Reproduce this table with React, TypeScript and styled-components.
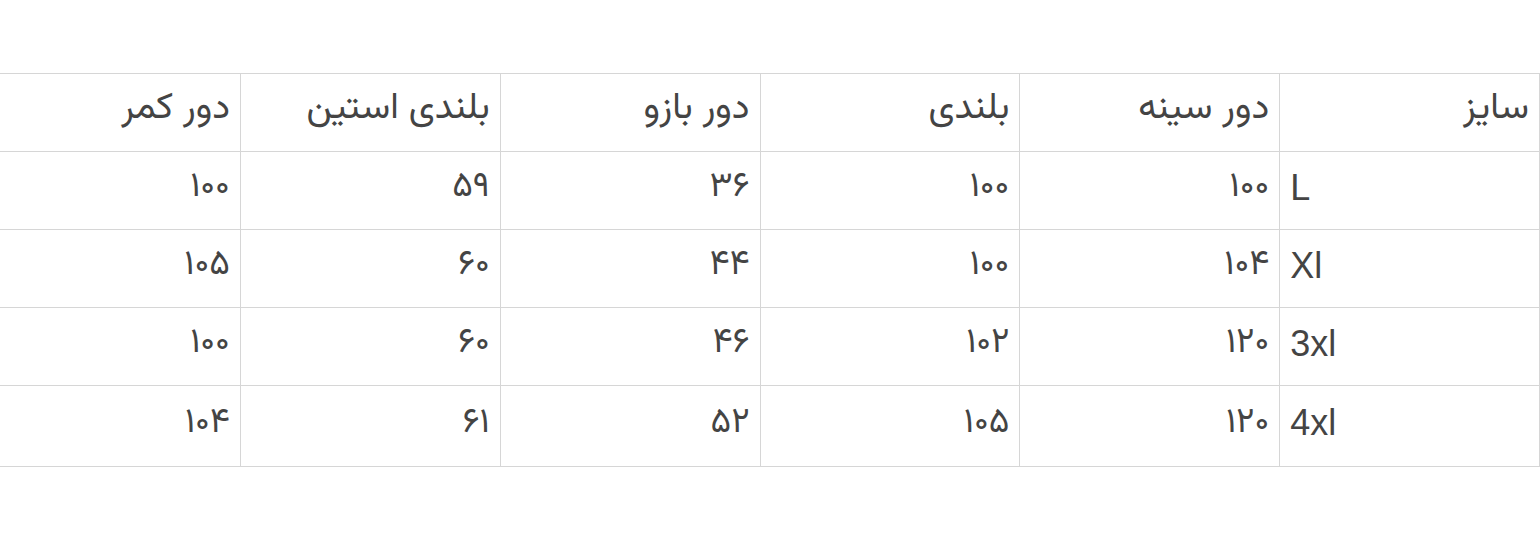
import styled, { createGlobalStyle } from 'styled-components'

const GlobalStyle = createGlobalStyle`
  html, body {
    margin: 0;
    padding: 0;
    background: #ffffff;
  }
  body {
    font-family: 'Liberation Sans', 'Vazirmatn', 'DejaVu Sans', sans-serif;
    color: #444444;
  }
`

type Row = {
  size: string
  values: string[]
}

const headers = ['سایز', 'دور سینه', 'بلندی', 'دور بازو', 'بلندی استین', 'دور کمر']

const rows: Row[] = [
  { size: 'L', values: ['۱۰۰', '۱۰۰', '۳۶', '۵۹', '۱۰۰'] },
  { size: 'Xl', values: ['۱۰۴', '۱۰۰', '۴۴', '۶۰', '۱۰۵'] },
  { size: '3xl', values: ['۱۲۰', '۱۰۲', '۴۶', '۶۰', '۱۰۰'] },
  { size: '4xl', values: ['۱۲۰', '۱۰۵', '۵۲', '۶۱', '۱۰۴'] },
]

export default function App() {
  return (
    <Page>
      <GlobalStyle />
      <TableWrap>
        <SizeTable>
          <thead>
            <tr>
              {headers.map((h) => (
                <HeadCell key={h}>{h}</HeadCell>
              ))}
            </tr>
          </thead>
          <tbody>
            {rows.map((row) => (
              <tr key={row.size}>
                <Cell $latin>{row.size}</Cell>
                {row.values.map((v, i) => (
                  <Cell key={i}>{v}</Cell>
                ))}
              </tr>
            ))}
          </tbody>
        </SizeTable>
      </TableWrap>
    </Page>
  )
}

const Page = styled.div`
  width: 1540px;
  height: 558px;
  padding-top: 73px;
  box-sizing: border-box;
  overflow: hidden;
`

const TableWrap = styled.div`
  direction: rtl;
  overflow: hidden;
`

const SizeTable = styled.table`
  width: 1560px;
  table-layout: fixed;
  border-collapse: collapse;
  direction: rtl;
`

const HeadCell = styled.th`
  height: 78px;
  padding: 0 10px 8px 10px;
  box-sizing: border-box;
  border: 1px solid #d6d6d6;
  text-align: right;
  vertical-align: middle;
  font-family: 'Vazirmatn', 'DejaVu Sans', sans-serif;
  font-weight: 400;
  font-size: 37px;
  color: #444444;
  white-space: nowrap;
`

const Cell = styled.td<{ $latin?: boolean }>`
  height: 78px;
  padding: 0 10px 6px 10px;
  box-sizing: border-box;
  border: 1px solid #d6d6d6;
  text-align: ${(p) => (p.$latin ? 'left' : 'right')};
  vertical-align: middle;
  font-family: ${(p) =>
    p.$latin ? "'Liberation Sans', Arial, sans-serif" : "'Vazirmatn', 'DejaVu Sans', sans-serif"};
  font-size: ${(p) => (p.$latin ? '36px' : '35px')};
  color: #444444;
  white-space: nowrap;
  tr:last-child > & {
    height: 81px;
  }
`
